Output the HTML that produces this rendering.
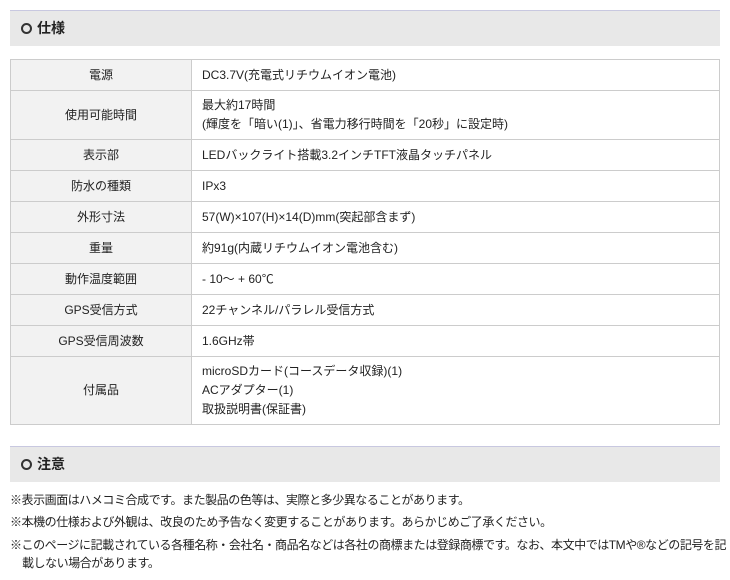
<!DOCTYPE html>
<html><head><meta charset="utf-8"><style>
*{margin:0;padding:0;box-sizing:border-box}
body{width:730px;height:580px;background:#fff;font-family:"Liberation Sans","Noto Sans CJK JP",sans-serif;font-size:12px;color:#222;position:relative;overflow:hidden}
.h{position:absolute;left:10px;width:710px;height:36px;background:#e8e8e8;border-top:1px solid #c8c8e0;font-size:14px;font-weight:bold;line-height:34px;padding-left:27px}
.h:before{content:"";position:absolute;left:11px;top:12px;width:7px;height:7px;border:2.5px solid #333;border-radius:50%;background:#e8e8e8}
table{position:absolute;left:10px;top:59px;width:710px;border-collapse:collapse}
td{border:1px solid #ccc;height:31px;padding:0 10px;line-height:19px}
td.l{width:181px;background:#f2f2f2;text-align:center}
p.n{position:absolute;left:10px;font-size:12px;line-height:18px;width:718px;letter-spacing:-0.45px}
</style></head><body>
<div class="h" style="top:10px">仕様</div>
<table>
<tr><td class="l">電源</td><td>DC3.7V(充電式リチウムイオン電池)</td></tr>
<tr><td class="l" style="height:49px">使用可能時間</td><td>最大約17時間<br>(輝度を「暗い(1)」、省電力移行時間を「20秒」に設定時)</td></tr>
<tr><td class="l">表示部</td><td>LEDバックライト搭載3.2インチTFT液晶タッチパネル</td></tr>
<tr><td class="l" style="height:30px">防水の種類</td><td>IPx3</td></tr>
<tr><td class="l">外形寸法</td><td>57(W)×107(H)×14(D)mm(突起部含まず)</td></tr>
<tr><td class="l">重量</td><td>約91g(内蔵リチウムイオン電池含む)</td></tr>
<tr><td class="l">動作温度範囲</td><td>- 10～ + 60℃</td></tr>
<tr><td class="l">GPS受信方式</td><td>22チャンネル/パラレル受信方式</td></tr>
<tr><td class="l">GPS受信周波数</td><td>1.6GHz帯</td></tr>
<tr><td class="l" style="height:68px">付属品</td><td>microSDカード(コースデータ収録)(1)<br>ACアダプター(1)<br>取扱説明書(保証書)</td></tr>
</table>
<div class="h" style="top:446px">注意</div>
<p class="n" style="top:491px">※表示画面はハメコミ合成です。また製品の色等は、実際と多少異なることがあります。</p>
<p class="n" style="top:513px">※本機の仕様および外観は、改良のため予告なく変更することがあります。あらかじめご了承ください。</p>
<p class="n" style="top:536px;padding-left:12px;text-indent:-12px">※このページに記載されている各種名称・会社名・商品名などは各社の商標または登録商標です。なお、本文中ではTMや®などの記号を記載しない場合があります。</p>
</body></html>
